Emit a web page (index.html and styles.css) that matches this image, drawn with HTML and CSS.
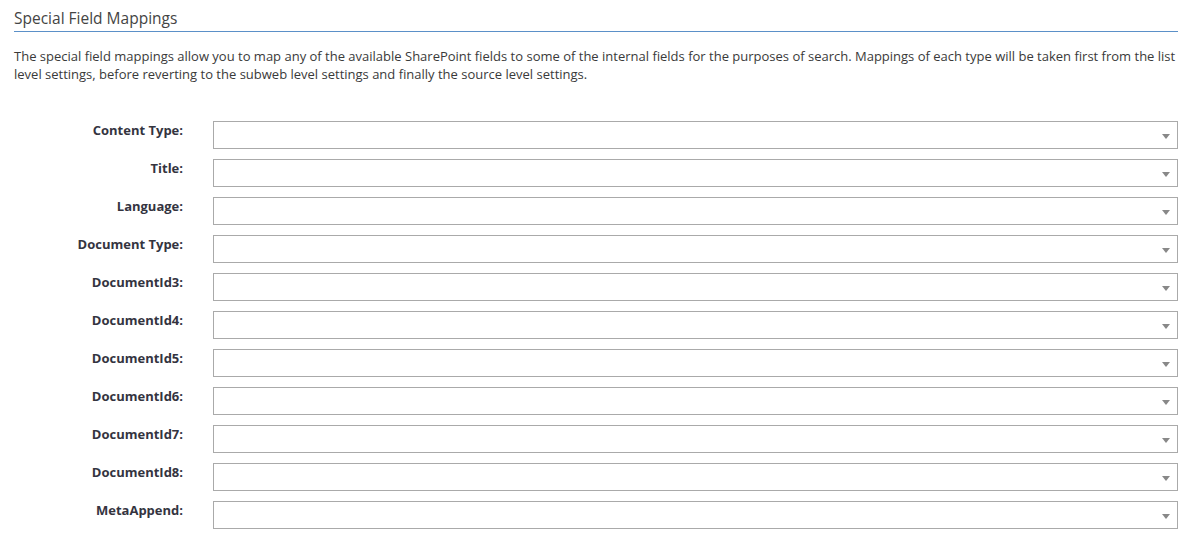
FILE: index.html
```html
<!DOCTYPE html>
<html>
<head>
<meta charset="utf-8">
<link rel="stylesheet" href="styles.css">
</head>
<body>
<div class="page">
  <h2 class="title">Special Field Mappings</h2>
  <p class="desc">The special field mappings allow you to map any of the available SharePoint fields to some of the internal fields for the purposes of search. Mappings of each type will be taken first from the list level settings, before reverting to the subweb level settings and finally the source level settings.</p>
  <div class="form">
    <div class="row"><label class="lbl">Content Type:</label><div class="sel"><span class="arrow"></span></div></div>
    <div class="row"><label class="lbl">Title:</label><div class="sel"><span class="arrow"></span></div></div>
    <div class="row"><label class="lbl">Language:</label><div class="sel"><span class="arrow"></span></div></div>
    <div class="row"><label class="lbl">Document Type:</label><div class="sel"><span class="arrow"></span></div></div>
    <div class="row"><label class="lbl">DocumentId3:</label><div class="sel"><span class="arrow"></span></div></div>
    <div class="row"><label class="lbl">DocumentId4:</label><div class="sel"><span class="arrow"></span></div></div>
    <div class="row"><label class="lbl">DocumentId5:</label><div class="sel"><span class="arrow"></span></div></div>
    <div class="row"><label class="lbl">DocumentId6:</label><div class="sel"><span class="arrow"></span></div></div>
    <div class="row"><label class="lbl">DocumentId7:</label><div class="sel"><span class="arrow"></span></div></div>
    <div class="row"><label class="lbl">DocumentId8:</label><div class="sel"><span class="arrow"></span></div></div>
    <div class="row"><label class="lbl">MetaAppend:</label><div class="sel"><span class="arrow"></span></div></div>
  </div>
</div>
</body>
</html>
```
FILE: styles.css
```css
html, body {
  margin: 0;
  padding: 0;
  background: #fff;
}
.page {
  font-family: "Open Sans", "Liberation Sans", sans-serif;
  color: #383838;
  width: 1164px;
  padding: 7px 0 0 14px;
}
.title {
  margin: 0;
  font-size: 15.5px;
  font-weight: 400;
  line-height: 22px;
  color: #444;
  padding-bottom: 2px;
  border-bottom: 1px solid #5b90c8;
}
.desc {
  margin: 15px 0 0 0;
  font-size: 13px;
  line-height: 18px;
  color: #3a3a3a;
}
.form {
  margin-top: 38px;
  display: flex;
  flex-direction: column;
  gap: 10px;
}
.row {
  display: flex;
  align-items: flex-start;
  gap: 30px;
}
.lbl {
  width: 169px;
  flex: none;
  text-align: right;
  font-size: 13px;
  font-weight: 700;
  line-height: 18px;
  padding-top: 0;
  color: #34343f;
}
.sel {
  flex: 1;
  height: 26px;
  border: 1px solid #aaa;
  display: flex;
  align-items: center;
  justify-content: flex-end;
  padding-right: 7px;
  box-sizing: content-box;
}
.arrow {
  width: 0;
  height: 0;
  border-left: 4px solid transparent;
  border-right: 4px solid transparent;
  border-top: 5px solid #888;
  margin-top: 2px;
}
```
